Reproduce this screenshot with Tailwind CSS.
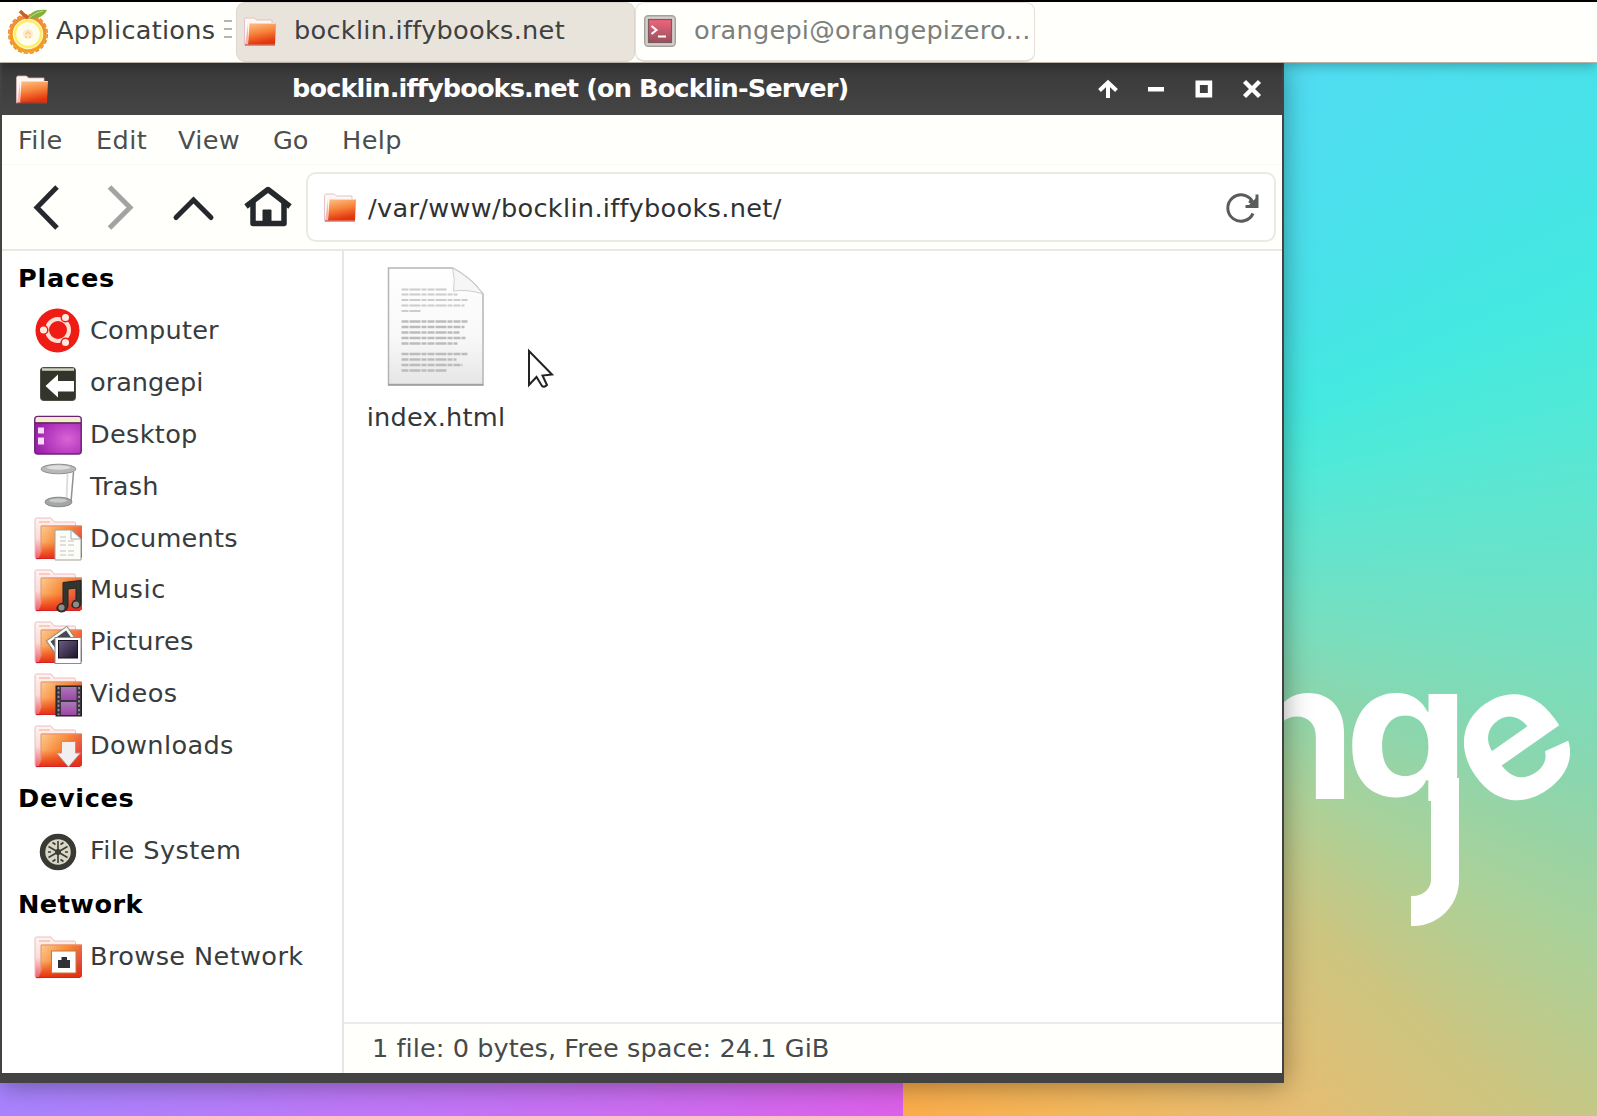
<!DOCTYPE html>
<html lang="en">
<head>
<meta charset="utf-8">
<title>bocklin.iffybooks.net</title>
<script src="https://cdn.jsdelivr.net/npm/@tailwindcss/browser@4"></script>
</head>
<body class="w-[1597px] h-[1116px] overflow-hidden bg-white font-['DejaVu_Sans',sans-serif] text-[25.6px] leading-none text-[#3e4142] whitespace-nowrap">
<svg class="absolute h-0 w-0">
  <defs>
    <linearGradient id="fold" x1="0" y1="0" x2="0.25" y2="1"><stop offset="0" stop-color="#fbc48a"/><stop offset=".5" stop-color="#f8843c"/><stop offset="1" stop-color="#e2340e"/></linearGradient>
    <linearGradient id="foldBig" x1="0" y1="0.2" x2="1" y2=".8"><stop offset="0" stop-color="#fbc88c"/><stop offset=".45" stop-color="#f98a3a"/><stop offset="1" stop-color="#df3440"/></linearGradient>
    <linearGradient id="foldLow" x1="0" y1="0" x2="0" y2="1"><stop offset=".5" stop-color="#e8401a" stop-opacity="0"/><stop offset="1" stop-color="#e5300f"/></linearGradient>
    <linearGradient id="foldBack" x1="0" y1="0" x2="0" y2="1"><stop offset="0" stop-color="#fff3ef"/><stop offset=".5" stop-color="#fbdcd6"/><stop offset="1" stop-color="#f0586a"/></linearGradient>
    <radialGradient id="desk" cx=".7" cy=".6" r=".7"><stop offset="0" stop-color="#d964d6"/><stop offset="1" stop-color="#9c1fae"/></radialGradient>
    <linearGradient id="page" x1="0" y1="0" x2="0" y2="1"><stop offset="0" stop-color="#fff"/><stop offset=".6" stop-color="#f8f8f8"/><stop offset="1" stop-color="#e6e6e6"/></linearGradient>
    <linearGradient id="film" x1="0" y1="0" x2="0" y2="1"><stop offset="0" stop-color="#a77bb6"/><stop offset="1" stop-color="#a044a8"/></linearGradient>
    <linearGradient id="term" x1="0" y1="0" x2="0" y2="1"><stop offset="0" stop-color="#f0647c"/><stop offset="1" stop-color="#98505c"/></linearGradient>
    <linearGradient id="photo" x1="0" y1="0" x2="1" y2="1"><stop offset="0" stop-color="#6d5c86"/><stop offset="1" stop-color="#1b1426"/></linearGradient>
    <linearGradient id="citrus" x1="0" y1="0" x2="0" y2="1"><stop offset="0" stop-color="#ee8a3c"/><stop offset="1" stop-color="#f2a01f"/></linearGradient>
    <symbol id="folder-sm" viewBox="0 0 32 29">
      <path d="M.5 28V2.5L1.5 1h9l2 2H28v5L6 27z" fill="#fff6f2" stroke="#dcb8bc" stroke-width=".8"/>
      <path d="M1 28L4 7v20z" fill="#f4b7b4"/>
      <path d="M5.500 6H32L31 27.500H4z" fill="url(#fold)"/>
      <path d="M5.500 6.500H31.500" stroke="#fbd9a8" stroke-width="1"/>
      <path d="M1 28h30" stroke="#c9361a" stroke-width="1"/>
    </symbol>
    <symbol id="folder" viewBox="0 0 48 43">
      <path d="M1 40V2.500Q1 1 2.500 1H17l3 4h20q1.500 0 1.500 1.500V30L6 42H3q-2 0-2-2z" fill="url(#foldBack)" stroke="#e9bcc2" stroke-width="1"/>
      <path d="M5 5h11" stroke="#f5b59e" stroke-width="1.200"/>
      <path d="M7 8.500h41V39q0 2.500-2.500 2.500H4Q7 38 7 34z" fill="url(#foldBig)"/>
      <path d="M7 8.500h41V39q0 2.500-2.500 2.500H4Q7 38 7 34z" fill="url(#foldLow)"/>
      <path d="M7 35V9h40" fill="none" stroke="#e58f6c" stroke-width="1"/>
      <path d="M2 41.500h44" stroke="#d2232c" stroke-width="1.200"/>
    </symbol>
  </defs>
</svg>

<div class="flex h-full w-full flex-col">
  <!-- Panel -->
  <header class="relative z-20 flex h-[63px] w-full shrink-0 border-t-2 border-b border-t-black border-b-[#b9b2a9] bg-[#fffffc] shadow-[0_2px_12px_rgba(0,0,0,.3)]">
    <div class="flex h-[58px] items-center">
      <svg class="ml-[7px] h-[48px] w-[44px] shrink-0" viewBox="0 0 44 48">
        <circle cx="21" cy="27" r="19.300" fill="none" stroke="#ee8b2a" stroke-width="1.600" stroke-dasharray="4.200 1.860"/>
        <circle cx="21" cy="27" r="17" fill="#fff8c0" stroke="url(#citrus)" stroke-width="3.500"/>
        <circle cx="21" cy="27" r="13" fill="#fffdee" stroke="#ffee6a" stroke-width="2.500"/>
        <circle cx="21" cy="27" r="5" fill="#fdecc4"/>
        <path d="M18.500 27.500l2.500-3 2.500 3M18 30h2M22 30h2" stroke="#f8c896" stroke-width="1.300" fill="none"/>
        <path d="M13 4l4 4 4 3" stroke="#c4602c" stroke-width="3.500" fill="none"/>
        <path d="M22 11c1-6 7-9 18-8-3 6-9 10-18 8z" fill="#7fb23c"/><path d="M22 11c5-4 9-6 14-7" stroke="#c8de7c" fill="none"/>
      </svg>
      <span class="ml-[5px] w-[161px] tracking-[0.25px]">Applications</span>
      <div class="ml-[7px] flex w-2 flex-col gap-[6.500px] pb-1"><i class="h-[1.500px] bg-[#b4b4b2]"></i><i class="h-[1.500px] bg-[#b4b4b2]"></i><i class="h-[1.500px] bg-[#b4b4b2]"></i></div>
    </div>
    <div class="ml-[4px] flex h-[60px] w-[399px] items-center rounded-[9px] border border-[#dcd6ce] bg-[#e8e4dc] pb-[2px]">
      <svg class="ml-[7px] h-[29px] w-[32px]"><use href="#folder-sm"/></svg>
      <span class="ml-[18px] tracking-[0.28px]">bocklin.iffybooks.net</span>
    </div>
    <div class="flex h-[60px] w-[400px] items-center rounded-[9px] border border-b-2 border-[#e4ddd8] bg-[#fffffc] pb-[1px]">
      <svg class="ml-[8px] h-[32px] w-[32px]" viewBox="0 0 32 32">
        <rect x=".7" y=".7" width="30.600" height="30.600" rx="3.500" fill="#d3cfca" stroke="#a39f9b" stroke-width="1.400"/>
        <rect x="4.500" y="4.500" width="23" height="23" fill="url(#term)" stroke="#7b5a5c" stroke-width="1.200"/>
        <path d="M7.500 11l5 4-5 4M14 21.500h8" fill="none" stroke="#fff" stroke-width="2"/>
      </svg>
      <span class="ml-[18px] tracking-[0.22px] text-[#7d7f7d]">orangepi@orangepizero...</span>
    </div>
  </header>

  <!-- Desktop -->
  <main class="relative w-full flex-1 overflow-hidden bg-[conic-gradient(from_0deg_at_903px_507px,#58d4fa_0deg,#50ddf2_40deg,#48e2e8_57deg,#44e9e1_67deg,#50e9d8_76deg,#66e3cb_88deg,#76dfc0_97deg,#8ad6ae_107deg,#abd199_119deg,#ccc580_131deg,#e6bd72_144deg,#f3b75c_162deg,#fbad4b_180deg,#dd60ea_180deg,#be78f8_226deg,#a884ff_240deg,#9c88ff_270deg,#58d4fa_360deg)]">
    <!-- Wallpaper wordmark -->
    <svg class="absolute left-[1230px] top-[500px] h-[500px] w-[367px] font-['Inter',sans-serif] font-bold" viewBox="0 -100 367 500" fill="#fff">
      <clipPath id="bowl"><path d="M100-100h150v238H100z"/></clipPath>
      <text x="126" y="136" font-size="192" text-anchor="end">n</text>
      <g clip-path="url(#bowl)"><text transform="translate(114.500 135.500) scale(1.030 1)" font-size="192">g</text></g>
      <text transform="translate(284 83) rotate(-35) translate(-56 53)" font-size="188">e</text>
    </svg>
    <div class="absolute left-[1411px] top-[715px] h-[148px] w-[48px] rounded-br-[46px] border-r-[28px] border-b-[30px] border-white"></div>

    <!-- File manager window -->
    <section class="relative flex h-[1020px] w-[1284px] flex-col border-x-2 border-b-[10px] border-[#434344] bg-[#fffffc] shadow-[0_2px_26px_rgba(0,0,0,.38)]">
      <div class="flex h-[52px] shrink-0 items-center bg-linear-to-b from-[#393939] to-[#454545]">
        <svg class="ml-[14px] h-[29px] w-[32px]"><use href="#folder-sm"/></svg>
        <h1 class="ml-[244px] w-[806px] font-bold text-white tracking-[-0.88px]">bocklin.iffybooks.net (on Bocklin-Server)</h1>
        <div class="flex items-center gap-[28px] text-white">
          <svg class="h-5 w-5" viewBox="0 0 20 20" fill="none" stroke="currentColor" stroke-width="4"><path d="M10 19V4M1.500 11.500L10 3.500l8.500 8"/></svg>
          <svg class="h-5 w-5" viewBox="0 0 20 20"><path d="M2 8h16v4.500H2z" fill="currentColor"/></svg>
          <svg class="h-5 w-5" viewBox="0 0 20 20" fill="none" stroke="currentColor" stroke-width="4.400"><path d="M3.700 3.700h12.300v12.600H3.700z"/></svg>
          <svg class="h-5 w-5" viewBox="0 0 20 20" fill="none" stroke="currentColor" stroke-width="4.400"><path d="M2.500 2.500l15 15M17.500 2.500l-15 15"/></svg>
        </div>
      </div>
      <nav class="flex h-[50px] shrink-0 items-center border-b border-[#faf9f5] pl-[16px] pt-[2px] text-[#4b4e4e]">
        <span class="w-[78px] tracking-[0.5px]">File</span><span class="w-[82px] tracking-[0.4px]">Edit</span><span class="w-[95px] tracking-[0.3px]">View</span><span class="w-[69px]">Go</span><span class="tracking-[0.4px]">Help</span>
      </nav>
      <div class="flex h-[86px] shrink-0 items-center border-b-2 border-[#ebe7e2]">
        <svg class="ml-[29px] h-[48px] w-[32px]" viewBox="0 0 32 48" fill="none" stroke="#25292b" stroke-width="5"><path d="M26 4L6 24.500 26 45"/></svg>
        <svg class="ml-[40px] h-[48px] w-[32px]" viewBox="0 0 32 48" fill="none" stroke="#a2a3a3" stroke-width="5"><path d="M6.500 4L27 24.500 6.500 45"/></svg>
        <svg class="ml-[34px] h-[48px] w-[48px]" viewBox="0 0 48 48" fill="none" stroke="#25292b" stroke-width="5" stroke-linecap="round"><path d="M7 34.500L24.500 17 42 34.500"/></svg>
        <svg class="ml-[26px] h-[48px] w-[50px]" viewBox="0 0 50 48" fill="none" stroke="#25292b"><path d="M3 23.500L25 6.500l22 17" stroke-width="5.500" stroke-linejoin="round"/><path d="M10 19v21.500h31V19" stroke-width="5.500" stroke-linejoin="round"/><path d="M20 40V27h8v13z" fill="#25292b"/></svg>
        <div class="ml-[13px] flex h-[70px] w-[970px] items-center rounded-[10px] border-2 border-[#ebe9e4] bg-white text-[#2f3233]">
          <svg class="ml-[16px] h-[29px] w-[32px]"><use href="#folder-sm"/></svg>
          <span class="ml-[12px] w-[857px] pt-[3px] tracking-[0.32px]">/var/www/bocklin.iffybooks.net/</span>
          <svg class="mt-[2px] h-[32px] w-[34px]" viewBox="0 0 34 32" fill="none" stroke="#5a5c5c" stroke-width="3"><path d="M28 21.500A13.200 13.200 0 1 1 27.500 9.500"/><path d="M32 2.500V14.500H20.500M31 13L24 9" stroke-width="3"/><path d="M32 5v9h-9z" fill="#5a5c5c" stroke="none"/></svg>
        </div>
      </div>

      <div class="flex min-h-0 flex-1">
        <aside class="flex w-[342px] shrink-0 flex-col border-r-2 border-[#e8e6e4] bg-white pt-[1px] text-[#393c3d]">
          <h2 class="flex h-[51.9px] items-center pl-[16px] pt-[2px] font-bold tracking-[0.75px] text-black">Places</h2>
          <a class="flex h-[51.9px] items-center pl-[32px]">
            <svg class="h-[48px] w-[48px]" viewBox="0 0 48 48"><circle cx="23.500" cy="24.500" r="22" fill="#ee1c14"/><circle cx="24" cy="24" r="11" fill="none" stroke="#ffe0d6" stroke-width="4"/><g fill="#ffe9e0" stroke="#ee1c14" stroke-width="1.500"><circle cx="9.500" cy="24" r="4.300"/><circle cx="31.500" cy="11.500" r="4.300"/><circle cx="31.500" cy="36.500" r="4.300"/></g></svg>
            <span class="ml-[8px] pt-[2px] tracking-[0.2px]">Computer</span></a>
          <a class="flex h-[51.9px] items-center pl-[32px]">
            <svg class="h-[48px] w-[48px]" viewBox="0 0 48 48"><rect x="6.500" y="9.500" width="35" height="33" rx="3" fill="#33352d" stroke="#4c4d43"/><path d="M8 11.500h32" stroke="#d3d4c2" stroke-width="2.500"/><path d="M11.500 28L24 16.500V23h16v10.500H24v6z" fill="#fff"/></svg>
            <span class="ml-[8px] pt-[2px]">orangepi</span></a>
          <a class="flex h-[51.9px] items-center pl-[32px]">
            <svg class="h-[48px] w-[48px]" viewBox="0 0 48 48"><rect x=".8" y="6.500" width="46.400" height="37.500" rx="3" fill="url(#desk)" stroke="#6b2475" stroke-width="1.500"/><path d="M1.500 12.500V9q0-2 2-2h41q2 0 2 2v3.500z" fill="#f2eecb"/><path d="M1 13h46" stroke="#5c2a55" stroke-width="1.500"/><path d="M4 17.500h6v6H4zM4 27.500h6v7H4z" fill="#f7dcf6"/></svg>
            <span class="ml-[8px] pt-[2px] tracking-[0.3px]">Desktop</span></a>
          <a class="flex h-[51.9px] items-center pl-[32px]">
            <svg class="h-[48px] w-[48px]" viewBox="0 0 48 48"><path d="M39.500 10l-2.500 30" stroke="#8f9191" stroke-width="1.500"/><path d="M33.500 12l-1 26" stroke="#dedede" stroke-width="2"/><ellipse cx="24.500" cy="7" rx="17.500" ry="4.800" fill="#b7b9b9" stroke="#8e9090"/><ellipse cx="24.500" cy="5.500" rx="12" ry="2.200" fill="#dedede"/><ellipse cx="24.500" cy="40" rx="13.500" ry="4.800" fill="#a5a7a7" stroke="#858787"/><ellipse cx="24" cy="38.500" rx="9" ry="2" fill="#c9c9c9"/></svg>
            <span class="ml-[8px] pt-[2px] tracking-[0.2px]">Trash</span></a>
          <a class="flex h-[51.9px] items-center pl-[32px]">
            <svg class="h-[48px] w-[48px]" viewBox="0 0 48 48"><use href="#folder" y="4" width="48" height="43"/><path d="M21 17h17l9 9v21H21z" fill="#fcfcf8" stroke="#a5a19a"/><path d="M37 17v9h10z" fill="#fff" stroke="#a9a9a9"/><path d="M26 24h8M26 28h14M26 32h15M26 38h16M26 42h15" stroke="#c2c2c2" stroke-dasharray="6 2"/></svg>
            <span class="ml-[8px] pt-[2px] tracking-[0.2px]">Documents</span></a>
          <a class="flex h-[51.9px] items-center pl-[32px]">
            <svg class="h-[48px] w-[48px]" viewBox="0 0 48 48"><use href="#folder" y="4" width="48" height="43"/><path d="M29 17.500L47 15.500V38q0 5-5 5t-4-4q1-4 4-4V23l-8 1v17q-1 6-7 6-5-1-4-5 2-4 6-4z" fill="#33352f" stroke="#23251f"/><circle cx="27.500" cy="42.500" r="3" fill="#8b8d86"/><circle cx="42" cy="39.500" r="3" fill="#8b8d86"/></svg>
            <span class="ml-[8px] pt-[2px] tracking-[0.6px]">Music</span></a>
          <a class="flex h-[51.9px] items-center pl-[32px]">
            <svg class="h-[48px] w-[48px]" viewBox="0 0 48 48"><use href="#folder" y="4" width="48" height="43"/><g transform="rotate(-35 26 24)"><rect x="15" y="16" width="25" height="25" fill="#fbfbf6" stroke="#8b8680"/><rect x="18" y="19" width="19" height="18" fill="#454a52"/></g><rect x="21" y="20.500" width="26" height="26" fill="#fff" stroke="#8b8a8c"/><rect x="24.500" y="23.500" width="19" height="17.500" fill="url(#photo)" stroke="#17131e"/></svg>
            <span class="ml-[8px] pt-[2px] tracking-[0.3px]">Pictures</span></a>
          <a class="flex h-[51.9px] items-center pl-[32px]">
            <svg class="h-[48px] w-[48px]" viewBox="0 0 48 48"><use href="#folder" y="4" width="48" height="43"/><rect x="22" y="17" width="25.500" height="30" fill="#39343d" stroke="#211d24"/><rect x="27" y="18" width="15.500" height="13" fill="url(#film)"/><rect x="27" y="33" width="15.500" height="13" fill="url(#film)"/><path d="M24.500 18v28M45 18v28" stroke="#9b8f9f" stroke-width="1.800" stroke-dasharray="2.200 2.200"/></svg>
            <span class="ml-[8px] pt-[2px] tracking-[0.4px]">Videos</span></a>
          <a class="flex h-[51.9px] items-center pl-[32px]">
            <svg class="h-[48px] w-[48px]" viewBox="0 0 48 48"><use href="#folder" y="4" width="48" height="43"/><path d="M27.500 20.500h14V32h5L34.500 46 22.500 32h5z" fill="#f1efef" stroke="#c08d86"/></svg>
            <span class="ml-[8px] pt-[2px] tracking-[0.35px]">Downloads</span></a>
          <h2 class="mt-[1px] flex h-[51.9px] items-center pl-[16px] pt-[2px] font-bold tracking-[0.65px] text-black">Devices</h2>
          <a class="flex h-[51.9px] items-center pl-[32px]">
            <svg class="h-[48px] w-[48px]" viewBox="0 0 48 48"><circle cx="24" cy="26" r="15.500" fill="#d9d8c6" stroke="#393a34" stroke-width="5.500"/><g stroke="#3b3c36" stroke-width="1.600"><path d="M24 15v22M14.500 20.500l19 11M33.500 20.500l-19 11"/><path d="M18.500 16.500l3 2M29.500 16.500l-3 2M18.500 35.500l3-2M29.500 35.500l-3-2M14 26h3M31 26h3"/></g><circle cx="24" cy="26" r="3" fill="#3b3c36"/></svg>
            <span class="ml-[8px] pt-[2px] tracking-[0.45px]">File System</span></a>
          <h2 class="mt-[2px] flex h-[51.9px] items-center pl-[16px] pt-[2px] font-bold tracking-[0.45px] text-black">Network</h2>
          <a class="flex h-[51.9px] items-center pl-[32px]">
            <svg class="h-[48px] w-[48px]" viewBox="0 0 48 48"><use href="#folder" y="4" width="48" height="43"/><rect x="17.500" y="19" width="24.500" height="22" fill="#fff" stroke="#c07a35"/><path d="M24 36V28h3.500v-3h5.500v3H36v8z" fill="#2c3235"/></svg>
            <span class="ml-[8px] pt-[2px] tracking-[0.38px]">Browse Network</span></a>
        </aside>

        <div class="flex flex-1 flex-col bg-white">
          <div class="flex flex-1 items-start">
            <figure class="ml-[22px] mt-[14px] flex w-[140px] flex-col items-center">
              <svg class="h-[122px] w-[98px]" viewBox="0 0 98 122">
                <path d="M1.500 3h64Q83 12 96 29v90.500H1.500z" fill="url(#page)" stroke="#b5b5b5" stroke-width="1.500"/>
                <path d="M1 120h95.500" stroke="#9a9a9a" stroke-width="1.500"/>
                <path d="M65.500 3q3 12 1 23 14-2 29.500 3Q83 12 65.500 3z" fill="#f6f6f6" stroke="#cfcfcf"/>
                <g stroke="#cccccc" stroke-width="2.200" stroke-dasharray="7 1 11 1 5 1"><path d="M14.500 24.500h46M14.500 29.500h56M14.500 35h66M14.500 40.500h63M14.500 46h20"/></g>
                <g stroke="#bcbcbc" stroke-width="2.600" stroke-dasharray="7 1 11 1 5 1"><path d="M14.500 56.500h66M14.500 62h63M14.500 67.500h58M14.500 73h64M14.500 78.500h56M14.500 89h66M14.500 94.500h55M14.500 100h61M14.500 105.500h45"/></g>
              </svg>
              <figcaption class="mt-[18px] tracking-[0.2px] text-[#333637]">index.html</figcaption>
            </figure>
          </div>
          <footer class="flex h-[51px] shrink-0 items-center border-t-2 border-[#eeeae7] bg-[#fffffc] pl-[28px] text-[#474a4a]"><span class="tracking-[0.06px]">1 file: 0 bytes, Free space: 24.1 GiB</span></footer>
        </div>
      </div>

      <!-- Mouse pointer -->
      <svg class="absolute left-[524px] top-[285px] h-[42px] w-[30px]" viewBox="0 0 30 42"><path d="M3 3v34l7.500-8 5.500 9q2 2 5-1l-4.500-9.500 9.500-1z" fill="#fff" stroke="#222" stroke-width="2"/></svg>
    </section>
  </main>
</div>
</body>
</html>
